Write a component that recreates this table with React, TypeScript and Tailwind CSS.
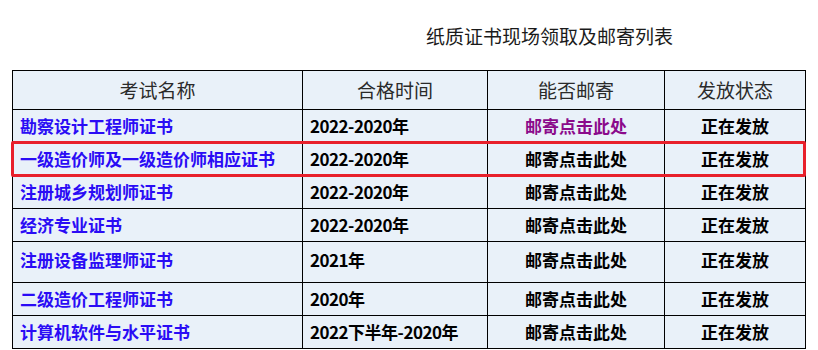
import React from 'react';

type Row = {
  name: string;
  time: string;
  visited?: boolean;
  tall?: boolean;
};

const rows: Row[] = [
  { name: '勘察设计工程师证书', time: '2022-2020年', visited: true },
  { name: '一级造价师及一级造价师相应证书', time: '2022-2020年' },
  { name: '注册城乡规划师证书', time: '2022-2020年' },
  { name: '经济专业证书', time: '2022-2020年' },
  { name: '注册设备监理师证书', time: '2021年', tall: true },
  { name: '二级造价工程师证书', time: '2020年' },
  { name: '计算机软件与水平证书', time: '2022下半年-2020年' },
];

const font = { fontFamily: '"Noto Sans CJK SC", "Liberation Sans", sans-serif' };

export default function App() {
  return (
    <div className="w-[818px] h-[350px] bg-white overflow-hidden" style={font}>
      {/* Title */}
      <div className="pt-[24px] pl-[426px] h-[70px] text-[19px] leading-[24px] text-[#1a1a1a]">
        纸质证书现场领取及邮寄列表
      </div>

      {/* Table */}
      <div className="relative ml-[12px] w-[793px]">
        <table className="w-[793px] border-collapse table-fixed bg-[#e9f1f9]">
          <colgroup>
            <col className="w-[290px]" />
            <col className="w-[185px]" />
            <col className="w-[177px]" />
            <col className="w-[141px]" />
          </colgroup>
          <thead>
            <tr className="h-[39px] text-[19px] text-[#2a2a2a] font-normal">
              <th className="border border-black font-normal">考试名称</th>
              <th className="border border-black font-normal">合格时间</th>
              <th className="border border-black font-normal">能否邮寄</th>
              <th className="border border-black font-normal">发放状态</th>
            </tr>
          </thead>
          <tbody className="text-[17px] font-semibold leading-[20px]">
            {rows.map(r => (
              <tr key={r.name} className={r.tall ? 'h-[41px]' : 'h-[33px]'}>
                <td
                  className={`border border-black pl-[7px] text-[#2a0cf5] ${
                    r.tall ? 'align-top pt-[8px]' : ''
                  }`}
                >
                  {r.name}
                </td>
                <td
                  className={`border border-black pl-[7px] text-black tracking-[-0.5px] ${
                    r.tall ? 'align-top pt-[8px]' : ''
                  }`}
                >
                  {r.time}
                </td>
                <td
                  className={`border border-black text-center ${
                    r.visited ? 'text-[#8b0a8b]' : 'text-black'
                  } ${r.tall ? 'align-top pt-[8px]' : ''}`}
                >
                  邮寄点击此处
                </td>
                <td
                  className={`border border-black text-center text-black ${
                    r.tall ? 'align-top pt-[8px]' : ''
                  }`}
                >
                  正在发放
                </td>
              </tr>
            ))}
          </tbody>
        </table>

        {/* Highlight box around second row */}
        <div className="absolute left-[-1px] top-[71px] w-[795px] h-[36px] border-[3px] border-[#e8202b] rounded-[2px] pointer-events-none" />
      </div>
    </div>
  );
}
